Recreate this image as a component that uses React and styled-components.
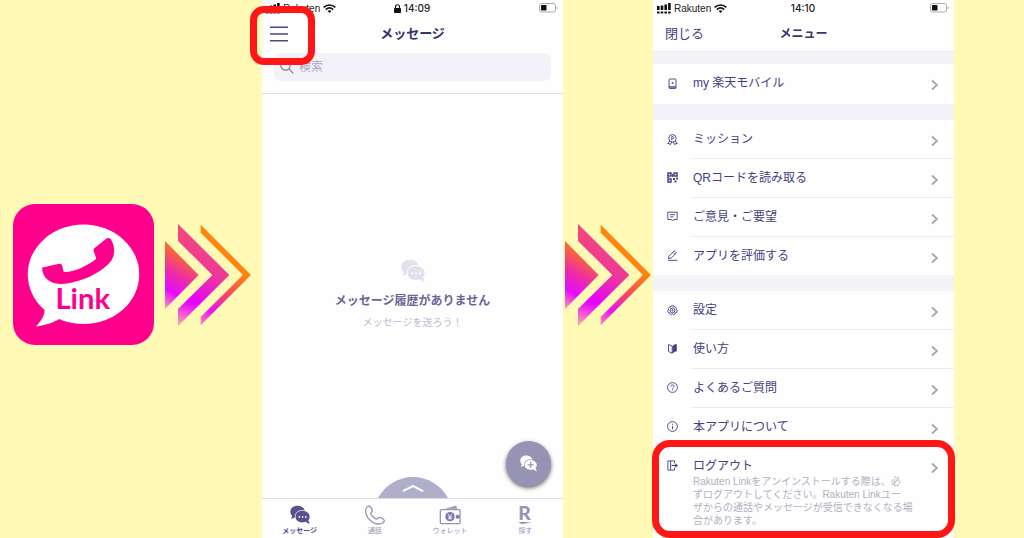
import React, { useId } from 'react';
import styled, { createGlobalStyle } from 'styled-components';

const GlobalStyle = createGlobalStyle`
  * {
    box-sizing: border-box;
  }

  body {
    margin: 0;
    background: #fffab5;
    font-family: 'Liberation Sans', 'Noto Sans CJK JP', sans-serif;
  }

  button {
    margin: 0;
    padding: 0;
    border: 0;
    background: none;
    color: inherit;
    font: inherit;
    cursor: pointer;
  }
`;

const Page = styled.main`
  display: grid;
  grid-template-columns:
    minmax(0, 154fr) minmax(0, 108fr) minmax(0, 301fr) minmax(0, 90fr)
    minmax(0, 301fr) minmax(0, 70fr);
  min-height: 100vh;
`;

const LogoCell = styled.div`
  display: flex;
  align-items: center;
  justify-content: flex-end;
  padding: 11px 0 0 13px;
`;

const ArrowCell = styled.div`
  display: flex;
  align-items: center;
  justify-content: center;
  padding-top: 12px;
`;

const Phone = styled.section`
  display: flex;
  flex-direction: column;
  background: #fefefe;
  color: #444180;
`;

const StatusBar = styled.div`
  display: grid;
  grid-template-columns: 1fr auto 1fr;
  align-items: center;
  height: 16px;
  padding: 0 5px 0 4px;
  color: #222;
  font-size: 10px;
`;

const Carrier = styled.span`
  display: flex;
  align-items: center;
  gap: 3px;
`;

const Clock = styled.time`
  display: flex;
  align-items: center;
  gap: 3px;
  font-family: Inter, sans-serif;
  font-weight: 500;
`;

const BatterySlot = styled.span`
  display: flex;
  justify-content: flex-end;
`;

const NavBar = styled.header`
  display: grid;
  grid-template-columns: 1fr auto 1fr;
  align-items: center;
  height: 35px;
  padding: 0 8px;
`;

const NavTitle = styled.h1`
  margin: 0;
  color: #36336f;
  font-size: ${(props) => props.$size || 12}px;
  font-weight: 700;
  line-height: 20px;
`;

const MenuButton = styled.button`
  position: relative;
  display: flex;
  align-items: center;
  justify-content: center;
  justify-self: start;
  width: 18px;
  height: 18px;
`;

const CloseButton = styled.button`
  justify-self: start;
  padding-left: 4px;
  font-size: 13px;
  line-height: 20px;
`;

const Highlight = styled.span`
  position: absolute;
  z-index: 2;
  inset: ${(props) => props.$inset};
  border: 7px solid #ff1616;
  border-radius: ${(props) => props.$radius}px;
  pointer-events: none;
`;

const SearchField = styled.label`
  display: flex;
  align-items: center;
  gap: 5px;
  height: 28px;
  margin: 2px 12px 12px;
  padding: 0 6px;
  border-radius: 7px;
  background: #f3f2f8;
`;

const SearchInput = styled.input`
  flex: 1;
  min-width: 0;
  padding: 0;
  border: 0;
  outline: 0;
  background: transparent;
  color: #444180;
  font: inherit;
  font-size: 12px;

  &::placeholder {
    color: #aaa8c2;
    opacity: 1;
  }
`;

const MessageBody = styled.div`
  position: relative;
  flex: 1;
  display: flex;
  flex-direction: column;
  align-items: center;
  justify-content: center;
  border-top: 1px solid #dcdce4;
  text-align: center;
`;

const EmptyTitle = styled.h2`
  margin: 8px 0 2px;
  color: #6a6698;
  font-size: 12px;
  font-weight: 700;
  line-height: 20px;
`;

const EmptyText = styled.p`
  margin: 0;
  color: #bdbbd0;
  font-size: 10px;
  line-height: 20px;
`;

const DrawerHandle = styled.button`
  position: absolute;
  bottom: 0;
  left: 50%;
  width: 70px;
  height: 21px;
  margin-left: -35px;
`;

const ComposeButton = styled.button`
  position: absolute;
  right: 12px;
  bottom: 12px;
  display: flex;
  align-items: center;
  justify-content: center;
  width: 45px;
  height: 45px;
  border-radius: 50%;
  background: #9793b5;
  box-shadow: 0 2px 4px rgba(0, 0, 0, 0.6);
`;

const TabBar = styled.nav`
  display: grid;
  grid-template-columns: repeat(4, 1fr);
  height: 40px;
  border-top: 1px solid #dcdce4;
`;

const Tab = styled.button`
  display: flex;
  flex-direction: column;
  align-items: center;
  gap: 1px;
  padding-top: 6px;
  color: ${(props) => (props.$active ? '#57528c' : '#9794b8')};
  font-size: 7px;
  font-weight: ${(props) => (props.$active ? 700 : 400)};
  line-height: 10px;
`;

const MenuContent = styled.div`
  flex: 1;
  display: flex;
  flex-direction: column;
  border-top: 1px solid #ebebf1;
  background: #f4f3f9;
`;

const MenuGroup = styled.ul`
  flex: ${(props) => (props.$last ? 1 : 'none')};
  margin: ${(props) => (props.$first ? 12 : 16)}px 0 0;
  padding: 0 0 ${(props) => (props.$first ? 2 : 0)}px;
  background: #fefefe;
  list-style: none;
`;

const MenuRow = styled.li`
  position: relative;
`;

const MenuLink = styled.a`
  display: flex;
  color: #444180;
  text-decoration: none;
`;

const MenuIcon = styled.span`
  display: flex;
  align-items: center;
  width: 38px;
  height: 38px;
  padding-left: 14px;
`;

const MenuBody = styled.span`
  flex: 1;
  display: flex;
  align-items: flex-start;
  justify-content: space-between;
  padding: 10px 16px 6px 2px;
  border-top: ${(props) => (props.$divided ? '1px solid #ebebf0' : '0')};
`;

const MenuText = styled.span`
  display: flex;
  flex-direction: column;
  font-size: 12px;
  line-height: 18px;
`;

const MenuNote = styled.span`
  padding-bottom: 5px;
  color: #b1b0bf;
  font-size: 10px;
  line-height: 13px;
  white-space: pre;
`;

const AppLogo = () => (
  <svg width="141" height="141" viewBox="39 40 425 425" role="img" aria-label="Rakuten Link">
    <rect x="39" y="40" width="425" height="425" rx="66" fill="#ff008c" />
    <ellipse cx="251.500" cy="252" rx="168" ry="150" fill="#fff" />
    <path d="M134 352C137 373 124 394 108 409C137 406 159 398 180 386L200 360Z" fill="#fff" />
    <path
      d="M127 236C126 233 128 231 131 231L178 220C183 219 186 221 187 225L192 245C218 248 269 224 290 205L282 181C281 177 282 175 285 173L321 144C326 141 331 142 334 146C346 165 348 193 335 211C307 247 243 278 184 281C150 282 128 260 127 236Z"
      fill="#ff008c"
    />
    <text x="167" y="358" fill="#ff008c" fontFamily="Lato, sans-serif" fontSize="88" fontWeight="700">
      Link
    </text>
  </svg>
);

const StepArrow = () => {
  const id = useId();

  return (
    <svg width="86" height="102" viewBox="491 103 258 306" aria-hidden="true">
      <defs>
        <linearGradient id={`${id}a`} gradientUnits="userSpaceOnUse" x1="560" y1="205" x2="478" y2="345">
          <stop offset="0" stopColor="#fb6a33" />
          <stop offset="0.35" stopColor="#ee2fa0" />
          <stop offset="0.7" stopColor="#e60aff" />
          <stop offset="1" stopColor="#ff90b4" />
        </linearGradient>
        <linearGradient id={`${id}b`} gradientUnits="userSpaceOnUse" x1="610" y1="130" x2="530" y2="400">
          <stop offset="0" stopColor="#f5487a" />
          <stop offset="0.4" stopColor="#ee3899" />
          <stop offset="0.75" stopColor="#e600ff" />
          <stop offset="1" stopColor="#ff9ab2" />
        </linearGradient>
        <linearGradient id={`${id}c`} gradientUnits="userSpaceOnUse" x1="720" y1="240" x2="592" y2="400">
          <stop offset="0" stopColor="#ff8410" />
          <stop offset="0.3" stopColor="#f9583f" />
          <stop offset="0.75" stopColor="#e813f0" />
          <stop offset="1" stopColor="#ff86b4" />
        </linearGradient>
      </defs>
      <path d="M491 154L592 256L491 358Z" fill={`url(#${id}a)`} />
      <path d="M530 103L684 256L530 409V358L633 256L530 154Z" fill={`url(#${id}b)`} />
      <path d="M598 105L749 256L598 407V382L725 256L598 129Z" fill={`url(#${id}c)`} />
    </svg>
  );
};

const SignalIcon = () => (
  <svg width="14" height="11" viewBox="0 0 14 11" fill="#111" aria-hidden="true">
    <path d="M0 3h2.600v4H0zM3.700 2.500h2.600v4.500H3.700zM7.400 1.500h2.600v5.500H7.400zM11.100 0h2.600v7h-2.600zM0 8.500h2.600v2H0zM3.700 8.500h2.600v2H3.700zM7.400 8.500h2.600v2H7.400zM11.100 8.500h2.600v2h-2.600z" />
  </svg>
);

const WifiIcon = () => (
  <svg width="13" height="9" viewBox="0 0 13 9" fill="none" stroke="#111" strokeWidth="1.700" aria-hidden="true">
    <path d="M.7 3.400C4 .2 9 .2 12.300 3.400M2.800 5.600C5 3.600 8 3.600 10.200 5.600" />
    <path d="M4.600 7C5.700 6 7.300 6 8.400 7L6.500 9Z" fill="#111" stroke="none" />
  </svg>
);

const BatteryIcon = () => (
  <svg width="19" height="10" viewBox="0 0 19 10" aria-hidden="true">
    <rect x=".5" y=".5" width="16" height="8.500" rx="2.200" fill="none" stroke="#aaa" />
    <rect x="2" y="2" width="5.500" height="5.500" rx=".8" fill="#111" />
    <path d="M17.600 3.200q1 .4 1 1.500t-1 1.500z" fill="#aaa" />
  </svg>
);

const LockIcon = () => (
  <svg width="7" height="9" viewBox="0 0 7 9" aria-hidden="true">
    <rect y="4" width="7" height="5" rx=".8" fill="#111" />
    <path d="M1.500 4.500V2.800a2 2 0 0 1 4 0V4.500" fill="none" stroke="#111" strokeWidth="1.100" />
  </svg>
);

const HamburgerIcon = () => (
  <svg width="18" height="16" viewBox="0 0 18 16" fill="none" stroke="#4b4882" strokeWidth="1.400" aria-hidden="true">
    <path d="M0 1.200h18M0 8h18M0 14.800h18" />
  </svg>
);

const SearchIcon = () => (
  <svg width="14" height="14" viewBox="0 0 14 14" fill="none" stroke="#7f7f8c" strokeWidth="1.200" aria-hidden="true">
    <circle cx="5.500" cy="5.500" r="4.600" />
    <path d="M9 9l4.300 4.300" />
  </svg>
);

const ChatIcon = ({ size, color, gap, plus }) => (
  <svg width={size} height={size} viewBox="0 0 62 60" aria-hidden="true">
    <path
      d="M23 1C10 1 1 9 1 20C1 26 4 30 7 33L3 42L17 38C33 40 46 30 46 19C46 9 36 1 23 1Z"
      fill={color}
    />
    <path
      d="M38 17C25 17 17 25 17 35C17 46 26 53 38 53C42 53 45 52 48 51L61 59L57 46C60 42 61 39 61 35C61 25 51 17 38 17Z"
      fill={color}
      stroke={gap}
      strokeWidth="5"
      paintOrder="stroke"
    />
    {plus ? (
      <path d="M39 24V46M28 35H50" stroke={gap} strokeWidth="4.500" />
    ) : (
      <g fill={gap}>
        <circle cx="29" cy="36" r="2.600" />
        <circle cx="39" cy="36" r="2.600" />
        <circle cx="49" cy="36" r="2.600" />
      </g>
    )}
  </svg>
);

const CallIcon = () => (
  <svg width="20" height="20" viewBox="0 0 60 60" fill="none" stroke="currentColor" strokeWidth="4" aria-hidden="true">
    <path d="M12 3C7 3 2 9 2 17C2 38 22 57 42 57C50 57 58 52 58 47C58 43 47 37 43 37C39 37 38 42 34 42C29 42 17 30 17 25C17 21 22 21 22 17C22 13 16 3 12 3Z" />
  </svg>
);

const WalletIcon = () => (
  <svg width="22" height="20" viewBox="0 0 66 60" aria-hidden="true">
    <path d="M16 11L51 2L55 11Z" fill="currentColor" />
    <rect x="4" y="14" width="59" height="42" rx="3" fill="none" stroke="currentColor" strokeWidth="4" />
    <circle cx="33" cy="35" r="14" fill="#7d79a8" />
    <circle cx="56" cy="35" r="6" fill="#7d79a8" />
    <path d="M27 27L33 35L39 27M33 35V44M27 36H39M27 40H39" fill="none" stroke="#fff" strokeWidth="2.400" />
  </svg>
);

const DiscoverMark = styled.svg`
  overflow: visible;
`;

const DiscoverIcon = () => (
  <DiscoverMark width="14" height="20" viewBox="0 0 42 60" fill="currentColor" aria-hidden="true">
    <text x="1" y="46" fontFamily="Lato, sans-serif" fontSize="58" fontWeight="900">
      R
    </text>
    <path d="M1 51H41L12 58Z" />
  </DiscoverMark>
);

const HandleShape = () => (
  <svg width="70" height="21" viewBox="0 0 70 21" aria-hidden="true">
    <path d="M0 21A39.700 39.700 0 0 1 70 21Z" fill="#b0aec8" />
    <path d="M25.500 13.800L35 9L44.500 13.800" fill="none" stroke="#fff" strokeWidth="2" strokeLinecap="round" strokeLinejoin="round" />
  </svg>
);

const ChevronIcon = () => (
  <svg width="7" height="22" viewBox="0 0 7 22" fill="none" stroke="#a4a3b3" strokeWidth="1.700" aria-hidden="true">
    <path d="M1 6.500L6 11L1 15.500" />
  </svg>
);

const glyphs = {
  mobile: (
    <>
      <rect x="2" y="1" width="7" height="9.500" rx=".8" />
      <path d="M2 9h7" strokeWidth="1.400" />
      <path d="M4.500 5h2M5.500 4v2" strokeWidth=".8" />
    </>
  ),
  mission: (
    <>
      <circle cx="5.500" cy="4.300" r="3.700" />
      <path d="M4.700 6.300V2.600h1.200a.9.900 0 0 1 0 1.900H4.700" strokeWidth=".8" />
      <path d="M2.700 7L.7 9.700l1.700-.2.800 1.300L4.800 8M8.300 7l2 2.700-1.700-.2-.8 1.300L6.200 8" />
    </>
  ),
  qr: (
    <>
      <path d="M1 1h3v3H1zM7 1h3v3H7zM1 7h3v3H1z" strokeWidth="1.500" />
      <path d="M6 6h2v2H6zM9 5.500h2v2H9zM7.500 8.500h2v2h-2zM5 2h1v3H5zM0 5h2v1H0z" fill="currentColor" stroke="none" />
    </>
  ),
  feedback: (
    <>
      <path d="M.8 1.200h9.400v7.300H6.700L5.500 9.900 4.300 8.500H.8z" />
      <path d="M3 3.700h5M3 5.900h3.500" />
    </>
  ),
  edit: (
    <>
      <path d="M1.500 8.600l.5-2.500L6.800 1.300q.6-.6 1.200 0l.9.900q.6.600 0 1.200L4.100 8.100zM5.900 2.300l2 2" />
      <path d="M1 10.300h9.500" />
    </>
  ),
  settings: (
    <>
      <path d="M4.400.8h2.200l.4 1.100 1.200-.2 1.300 1.600-.4 1.100 1.100.9-.4 2-1.300.3-.2 1.200-1.900.9-.9-.8-.9.800-1.900-.9-.2-1.200-1.300-.3-.4-2 1.100-.9-.4-1.100L2.800 1.700 4 1.900z" />
      <circle cx="5.500" cy="5.400" r="2.400" />
      <circle cx="5.500" cy="5.400" r=".7" />
    </>
  ),
  guide: (
    <>
      <path d="M1.500 1.500L5.200 3v7.300L1.500 8.500z" />
      <path d="M5.500 3l2.300-1.700v7.500L5.500 10.500zM7.700 1.300h2.100v7.300H7.700z" fill="currentColor" stroke="none" />
    </>
  ),
  help: (
    <>
      <circle cx="5.500" cy="5.500" r="4.900" />
      <path d="M4 4.400a1.500 1.500 0 1 1 2.300 1.200q-.8.400-.8 1M5.500 7.300v1.100" />
    </>
  ),
  info: (
    <>
      <circle cx="5.500" cy="5.500" r="4.900" />
      <path d="M5.500 4.800v3.500M5.500 2.700v1.100" />
    </>
  ),
  logout: (
    <>
      <path d="M7.500 3.300V.9H.9v9.200h6.600V7.700M3.600.9v9.200" />
      <path d="M4.500 5.500h5" strokeWidth="1.200" />
      <path d="M8.300 3.300L11 5.500 8.300 7.700z" fill="currentColor" stroke="none" />
    </>
  ),
};

const MenuGlyph = ({ name }) => (
  <svg width="11" height="11" viewBox="0 0 11 11" fill="none" stroke="currentColor" strokeWidth=".9" aria-hidden="true">
    {glyphs[name]}
  </svg>
);

const menuGroups = [
  [{ icon: 'mobile', label: 'my 楽天モバイル' }],
  [
    { icon: 'mission', label: 'ミッション' },
    { icon: 'qr', label: 'QRコードを読み取る' },
    { icon: 'feedback', label: 'ご意見・ご要望' },
    { icon: 'edit', label: 'アプリを評価する' },
  ],
  [
    { icon: 'settings', label: '設定' },
    { icon: 'guide', label: '使い方' },
    { icon: 'help', label: 'よくあるご質問' },
    { icon: 'info', label: '本アプリについて' },
    {
      icon: 'logout',
      label: 'ログアウト',
      note: 'Rakuten Linkをアンインストールする際は、必\nずログアウトしてください。Rakuten Linkユー\nザからの通話やメッセージが受信できなくなる場\n合があります。',
      highlighted: true,
    },
  ],
];

const tabs = [
  { label: 'メッセージ', icon: <ChatIcon size={20} color="#57528c" gap="#fefefe" />, active: true },
  { label: '通話', icon: <CallIcon /> },
  { label: 'ウォレット', icon: <WalletIcon /> },
  { label: '探す', icon: <DiscoverIcon /> },
];

const PhoneStatus = ({ time, locked }) => (
  <StatusBar>
    <Carrier>
      <SignalIcon />
      Rakuten
      <WifiIcon />
    </Carrier>
    <Clock>
      {locked && <LockIcon />}
      {time}
    </Clock>
    <BatterySlot>
      <BatteryIcon />
    </BatterySlot>
  </StatusBar>
);

const MessageScreen = () => (
  <Phone>
    <PhoneStatus time="14:09" locked />
    <NavBar>
      <MenuButton aria-label="メニュー">
        <HamburgerIcon />
        <Highlight $inset="-19px -27px -22px -20px" $radius={14} />
      </MenuButton>
      <NavTitle $size={13}>メッセージ</NavTitle>
    </NavBar>
    <SearchField>
      <SearchIcon />
      <SearchInput type="search" placeholder="検索" aria-label="検索" />
    </SearchField>
    <MessageBody>
      <ChatIcon size={24} color="#e3e2ec" gap="#fefefe" />
      <EmptyTitle>メッセージ履歴がありません</EmptyTitle>
      <EmptyText>メッセージを送ろう！</EmptyText>
      <DrawerHandle aria-label="開く">
        <HandleShape />
      </DrawerHandle>
      <ComposeButton aria-label="新規メッセージ">
        <ChatIcon size={17} color="#fff" gap="#9793b5" plus />
      </ComposeButton>
    </MessageBody>
    <TabBar>
      {tabs.map((tab) => (
        <Tab key={tab.label} $active={tab.active}>
          {tab.icon}
          {tab.label}
        </Tab>
      ))}
    </TabBar>
  </Phone>
);

const MenuScreen = () => (
  <Phone>
    <PhoneStatus time="14:10" />
    <NavBar>
      <CloseButton>閉じる</CloseButton>
      <NavTitle>メニュー</NavTitle>
    </NavBar>
    <MenuContent>
      {menuGroups.map((items, index) => (
        <MenuGroup key={items[0].label} $first={index === 0} $last={index === menuGroups.length - 1}>
          {items.map((item, row) => (
            <MenuRow key={item.label}>
              <MenuLink href="#">
                <MenuIcon>
                  <MenuGlyph name={item.icon} />
                </MenuIcon>
                <MenuBody $divided={row > 0}>
                  <MenuText>
                    {item.label}
                    {item.note && <MenuNote>{item.note}</MenuNote>}
                  </MenuText>
                  <ChevronIcon />
                </MenuBody>
              </MenuLink>
              {item.highlighted && <Highlight $inset="-6px -1px 0" $radius={18} />}
            </MenuRow>
          ))}
        </MenuGroup>
      ))}
    </MenuContent>
  </Phone>
);

const App = () => (
  <>
    <GlobalStyle />
    <Page>
      <LogoCell>
        <AppLogo />
      </LogoCell>
      <ArrowCell>
        <StepArrow />
      </ArrowCell>
      <MessageScreen />
      <ArrowCell>
        <StepArrow />
      </ArrowCell>
      <MenuScreen />
    </Page>
  </>
);

export default App;
